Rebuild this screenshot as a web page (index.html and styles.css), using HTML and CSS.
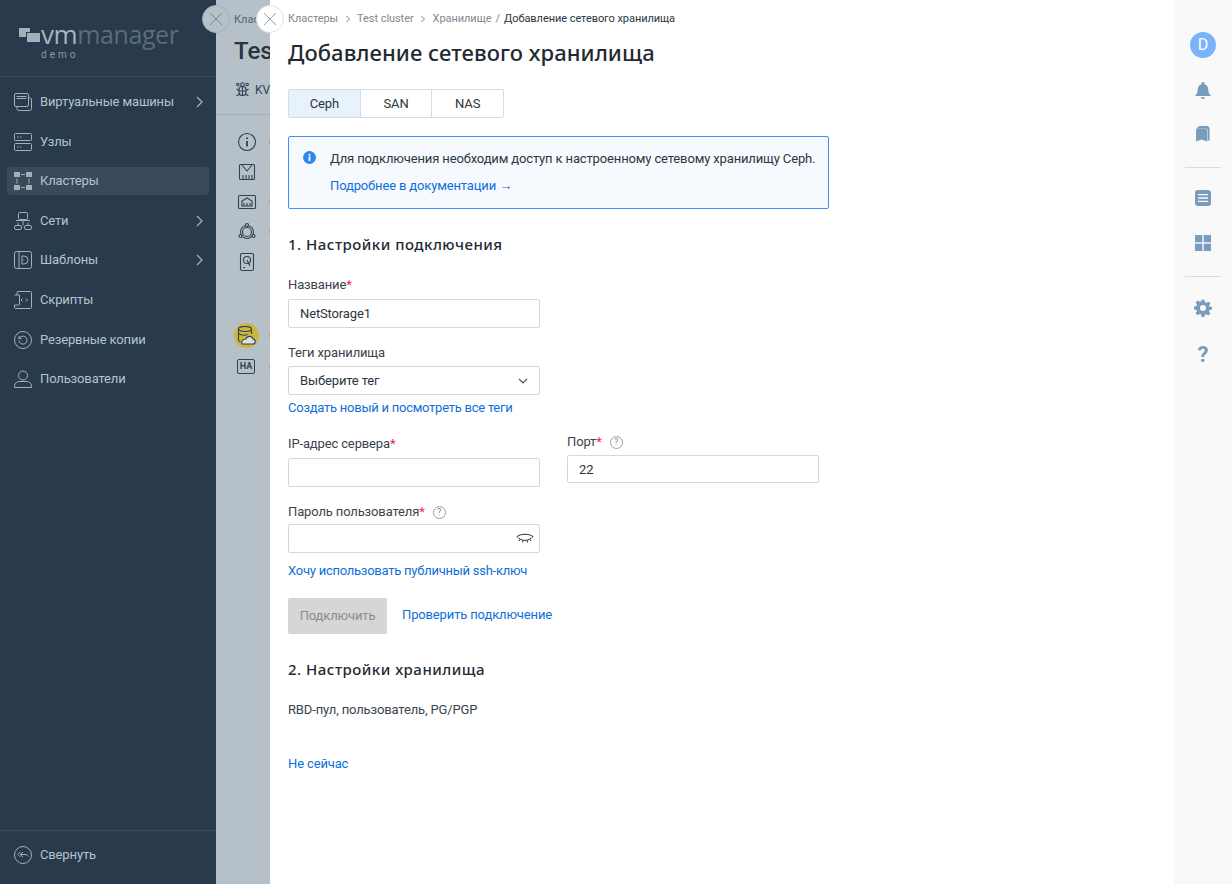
FILE: index.html
```html
<!DOCTYPE html>
<html lang="ru">
<head>
<meta charset="utf-8">
<title>VMmanager</title>
<link rel="stylesheet" href="styles.css">
</head>
<body>
<div class="app">
  <aside class="sidebar">
    <div class="logo">
      <div class="logo-row">
        <svg class="logo-mark" width="21" height="16" viewBox="0 0 21 16"><path d="M0 1h11v4H7v5H0z" fill="#a5afb9"/><rect x="8" y="6" width="13" height="9" fill="#a5afb9"/></svg>
        <span class="logo-vm">vm</span><span class="logo-manager">manager</span>
      </div>
      <div class="logo-demo">demo</div>
    </div>
    <nav class="nav">
      <a class="nav-item"><svg class="nav-icon" viewBox="0 0 18 18"><rect x=".5" y=".5" width="14" height="13" rx="1.500"/><path d="M3 13.500v2a2 2 0 0 0 2 2h10.500a2 2 0 0 0 2-2V7a2 2 0 0 0-3-2M2.500 3.500h10M2.500 5.500h10"/></svg><span class="nav-text">Виртуальные машины</span><svg class="chev" viewBox="0 0 8 12"><path d="M1 1l5 5-5 5"/></svg></a>
      <a class="nav-item"><svg class="nav-icon" viewBox="0 0 18 18"><rect x=".5" y=".5" width="17" height="7" rx="1"/><rect x=".5" y="10.500" width="17" height="7" rx="1"/><path d="M3 4h1.500M6 4h1.500M3 14h1.500M6 14h1.500"/></svg><span class="nav-text">Узлы</span></a>
      <a class="nav-item active"><svg class="nav-icon" viewBox="0 0 18 18"><g class="fillg"><rect x="0" y="0" width="6" height="5"/><rect x="12" y="0" width="6" height="5"/><rect x="0" y="13" width="6" height="5"/><rect x="12" y="13" width="6" height="5"/></g><path d="M7 2.500h4M7 15.500h4M3 6.500v5M15 6.500v5"/></svg><span class="nav-text">Кластеры</span></a>
      <a class="nav-item"><svg class="nav-icon" viewBox="0 0 18 18"><rect x="4.500" y=".5" width="9" height="7" rx="1"/><path d="M2 8.500h14M9 7.500v6M4 10.500v3M14 10.500v3"/><rect x=".5" y="13.500" width="7" height="4" rx="1.500"/><rect x="10.500" y="13.500" width="7" height="4" rx="1.500"/></svg><span class="nav-text">Сети</span><svg class="chev" viewBox="0 0 8 12"><path d="M1 1l5 5-5 5"/></svg></a>
      <a class="nav-item"><svg class="nav-icon" viewBox="0 0 18 18"><rect x=".5" y=".5" width="17" height="17" rx="2"/><path d="M5 .5v17M8 5h2a4 4 0 0 1 0 8H8zM9.500 9h.5"/></svg><span class="nav-text">Шаблоны</span><svg class="chev" viewBox="0 0 8 12"><path d="M1 1l5 5-5 5"/></svg></a>
      <a class="nav-item"><svg class="nav-icon" viewBox="0 0 18 18"><path d="M3 4V1.500a1 1 0 0 1 1-1h12.500a1 1 0 0 1 1 1v15a1 1 0 0 1-1 1H2a1.500 1.500 0 0 1-1.500-1.500v-2h4M.5 4h5v10M8.500 7.500L7 9l1.500 1.500M12 7.500L13.500 9 12 10.500"/></svg><span class="nav-text">Скрипты</span></a>
      <a class="nav-item"><svg class="nav-icon" viewBox="0 0 18 18"><circle cx="9" cy="9" r="8.500"/><path d="M5 9.500a4 4 0 1 0 1.500-3.500L5 7.500M5 5v2.500h2.500"/></svg><span class="nav-text">Резервные копии</span></a>
      <a class="nav-item"><svg class="nav-icon" viewBox="0 0 18 18"><circle cx="9" cy="5.500" r="4.500"/><path d="M.5 17.500v-1.500c0-3 3-4.500 4.500-4.500h8c1.500 0 4.500 1.500 4.500 4.500v1.500z"/></svg><span class="nav-text">Пользователи</span></a>
    </nav>
    <a class="collapse"><svg class="nav-icon" viewBox="0 0 18 18"><circle cx="9" cy="9" r="8.500"/><path d="M6.500 6L4 8.500 6.500 11M9 6L6.500 8.500 9 11M7 8.500h4c2 0 3 1 3.500 2"/></svg><span class="nav-text">Свернуть</span></a>
  </aside>

  <div class="under">
    <div class="under-crumb">Кластеры</div>
    <div class="under-title">Test cluster</div>
    <div class="under-tag">
      <svg class="kvm" width="13" height="16" viewBox="0 0 13 16"><g fill="none" stroke="#33424f" stroke-width="1.100"><circle cx="6.500" cy="2.500" r="1.800"/><circle cx="1.800" cy="2.500" r="1.200"/><circle cx="11.200" cy="2.500" r="1.200"/><rect x="3" y="4.500" width="7" height="9" rx="3"/><path d="M3 9h7M6.500 4.500v9M.5 7l2.500 1.500M12.500 7L10 8.500M.5 14l3-2M12.500 14l-3-2"/></g></svg>
      <span>KVM</span>
    </div>
    <ul class="under-list">
      <li><svg class="ui" viewBox="0 0 20 20"><circle cx="10" cy="10" r="8.500"/><path d="M10 9v5.500M10 5.500v1.500" stroke-width="1.800"/></svg><span>Обзор</span></li>
      <li><svg class="ui" viewBox="0 0 20 20"><rect x="2.500" y="2.500" width="15" height="15" rx="1"/><path d="M5 3l5 6 5-6M6 17v-4M9 17v-4M12 17v-4M15 17v-4"/></svg><span>Узлы</span></li>
      <li><svg class="ui" viewBox="0 0 20 20"><rect x="1.500" y="3.500" width="17" height="13" rx="1"/><path d="M5 14V9l5-3 5 3v5zM7 14v-3M10 14v-3M13 14v-3"/></svg><span>Сети</span></li>
      <li><svg class="ui" viewBox="0 0 20 20"><circle cx="10" cy="10" r="6.500"/><circle cx="10" cy="10" r="4.500"/><circle cx="10" cy="3" r="1.500" fill="#b6c0c8"/><circle cx="3.500" cy="14" r="1.500" fill="#b6c0c8"/><circle cx="16.500" cy="14" r="1.500" fill="#b6c0c8"/></svg><span>Ceph</span></li>
      <li><svg class="ui" viewBox="0 0 20 20"><rect x="3.500" y="1.500" width="13" height="17" rx="1.500"/><circle cx="10" cy="8" r="3.500"/><path d="M6 15.500h2M10 8l3 6"/></svg><span>Хранилище</span></li>
    </ul>
    <div class="under-extra">
      <div class="under-row">
        <div class="badge"><svg width="19" height="19" viewBox="0 0 19 19" fill="none" stroke="#33424f" stroke-width="1.100"><ellipse cx="8" cy="3" rx="6.500" ry="2.500"/><path d="M1.500 3v11c0 1 1 1.500 2 2M14.500 3v5M1.500 7.500c2 1.500 6 2 9 1"/><path d="M5 18h11c3 0 3-4.500 0-5-1-3.500-6-3.500-7 0-3 0-5 2-4 5z" fill="#dfe0dc"/></svg></div>
        <span>Сетевое</span>
      </div>
      <div class="under-row">
        <div class="ha">HA</div>
        <span>Отказоустойчивость</span>
      </div>
    </div>
  </div>

  <button class="close close-back" aria-label="Закрыть"><svg width="14" height="14" viewBox="0 0 14 14"><path d="M1 1l12 12M13 1L1 13"/></svg></button>
  <button class="close close-front" aria-label="Закрыть"><svg width="14" height="14" viewBox="0 0 14 14"><path d="M1 1l12 12M13 1L1 13"/></svg></button>

  <main class="drawer">
    <div class="crumbs">
      <span>Кластеры</span><svg class="crumb-chev" viewBox="0 0 6 8"><path d="M1.500 1l3 3-3 3"/></svg><span>Test cluster</span><svg class="crumb-chev" viewBox="0 0 6 8"><path d="M1.500 1l3 3-3 3"/></svg><span>Хранилище</span><span class="crumb-sep">/</span><span class="crumb-cur">Добавление сетевого хранилища</span>
    </div>
    <h1 class="title">Добавление сетевого хранилища</h1>
    <div class="tabs">
      <div class="tab tab-on">Ceph</div>
      <div class="tab">SAN</div>
      <div class="tab">NAS</div>
    </div>
    <div class="info">
      <svg class="info-icon" width="13" height="13" viewBox="0 0 13 13"><circle cx="6.500" cy="6.500" r="6.500" fill="#2f86ee"/><rect x="5.600" y="5.500" width="1.800" height="4.500" fill="#fff"/><rect x="5.600" y="3" width="1.800" height="1.700" fill="#fff"/></svg>
      <div class="info-body">
        <p class="info-text">Для подключения необходим доступ к настроенному сетевому хранилищу Ceph.</p>
        <a class="link info-link">Подробнее в документации →</a>
      </div>
    </div>
    <h2 class="section sec1">1. Настройки подключения</h2>
    <label class="label lb-name">Название<i>*</i></label>
    <input class="input" value="NetStorage1">
    <label class="label lb-tags">Теги хранилища</label>
    <div class="input select">Выберите тег<svg width="10" height="6" viewBox="0 0 10 6"><path d="M1 1l4 4 4-4"/></svg></div>
    <a class="link lk-tags">Создать новый и посмотреть все теги</a>
    <div class="cols">
      <div class="col">
        <label class="label lb-ip">IP-адрес сервера<i>*</i></label>
        <input class="input ip">
        <label class="label lb-pass">Пароль пользователя<i>*</i><span class="help">?</span></label>
        <div class="input pass"><svg width="18" height="11" viewBox="0 0 18 11" fill="none" stroke="#222b33" stroke-width="1"><path d="M1 3.500C5 .5 13 .5 17 3.500M1 3.500c.5.5 1 1 2 2 4 2.500 8 2.500 12 0l2-2M4 6.500l-1 1.500M7 7.500l-.5 2M11 7.500l.5 2M14 6.500l1 1.500"/></svg></div>
      </div>
      <div class="col">
        <label class="label lb-port">Порт<i>*</i><span class="help">?</span></label>
        <input class="input port" value="22">
      </div>
    </div>
    <a class="link lk-ssh">Хочу использовать публичный ssh-ключ</a>
    <div class="actions">
      <button class="btn" disabled>Подключить</button>
      <a class="link lk-check">Проверить подключение</a>
    </div>
    <h2 class="section sec2">2. Настройки хранилища</h2>
    <p class="plain">RBD-пул, пользователь, PG/PGP</p>
    <a class="link lk-later">Не сейчас</a>
  </main>

  <aside class="rail">
    <div class="avatar">D</div>
    <svg class="rail-icon r-bell" viewBox="0 0 18 20"><path d="M9 0a1.800 1.800 0 0 1 1.700 2.300C13.500 3 15 5.500 15 8.500c0 3 .6 4.500 2.500 6v1H.5v-1C2.400 13 3 11.500 3 8.500c0-3 1.500-5.500 4.300-6.200A1.800 1.800 0 0 1 9 0zM6.500 17h5a2.500 2 0 0 1-5 0z"/></svg>
    <svg class="rail-icon r-book" viewBox="0 0 16 18"><path d="M1 5a4 4 0 0 1 4-4h7a3 3 0 0 1 2.500 2.500V17l-2-1V6a3 3 0 0 0-3-3H5C3 3 1 3 1 5zM0 6a2.500 2.500 0 0 1 2.500-2.500h7A2.500 2.500 0 0 1 12 6v11.500L6 15.500 0 17.500z"/></svg>
    <hr class="rail-line l1">
    <svg class="rail-icon r-list" viewBox="0 0 16 16"><path fill-rule="evenodd" d="M3 0h10a3 3 0 0 1 3 3v10a3 3 0 0 1-3 3H3a3 3 0 0 1-3-3V3a3 3 0 0 1 3-3zM3 4v1.300h10V4zM3 7.300v1.400h10V7.300zM3 10.700V12h10v-1.300z"/></svg>
    <svg class="rail-icon r-grid" viewBox="0 0 16 16"><rect width="7.300" height="7.300"/><rect x="8.700" width="7.300" height="7.300"/><rect y="8.700" width="7.300" height="7.300"/><rect x="8.700" y="8.700" width="7.300" height="7.300"/></svg>
    <hr class="rail-line l2">
    <svg class="rail-icon r-gear" viewBox="0 0 24 24"><path fill-rule="evenodd" d="M10 1h4l.6 3.200 1.900.8 2.700-1.800 2.800 2.800-1.800 2.700.8 1.900L24 10v4l-3.200.6-.8 1.900 1.800 2.700-2.800 2.800-2.700-1.800-1.900.8L14 24h-4l-.6-3.200-1.900-.8-2.700 1.800L2 19l1.800-2.700-.8-1.900L0 14v-4l3.200-.6.800-1.900L2.200 4.800 5 2l2.700 1.800 1.900-.8zM12 8a4 4 0 1 0 0 8 4 4 0 0 0 0-8z"/></svg>
    <div class="rail-q">?</div>
  </aside>
</div>
</body>
</html>
```
FILE: styles.css
```css
* { box-sizing: border-box; }
html, body { margin: 0; height: 100%; }
body {
  font-family: Roboto, "Noto Sans", sans-serif;
  font-size: 13px;
  letter-spacing: -.14px;
  color: #2b3640;
  background: #fff;
  overflow: hidden;
}
.app { position: relative; display: flex; width: 1232px; height: 884px; overflow: hidden; }

/* sidebar */
.sidebar {
  width: 216px;
  flex: none;
  background: #283a4b;
  display: flex;
  flex-direction: column;
  color: #b6c3cf;
}
.logo { height: 77px; padding: 18px 0 0 19px; border-bottom: 1px solid #3a4b5b; }
.logo-row { display: flex; align-items: center; height: 32px; }
.logo-mark { margin-right: 1px; margin-top: 2px; }
.logo-vm { font-family: "Open Sans", sans-serif; font-size: 26px; color: #a9b4be; letter-spacing: -.4px; line-height: 32px; }
.logo-manager { font-family: "Open Sans", sans-serif; font-size: 25px; color: #5c6b79; letter-spacing: -.4px; line-height: 32px; }
.logo-demo { font-size: 10px; line-height: 10px; letter-spacing: 3px; color: #8b98a4; margin: 0 0 0 22px; }
.nav { display: flex; flex-direction: column; gap: 11.600px; padding: 11px 7px 0; flex: 1; }
.nav-item {
  display: flex; align-items: center; height: 28px;
  padding: 0 7px; border-radius: 3px;
}
.nav-item.active { background: #3a4a5a; }
.nav-icon { width: 18px; height: 18px; flex: none; fill: none; stroke: #a3afba; stroke-width: 1; margin-right: 8px; }
.fillg rect { fill: #a3afba; stroke: none; }
.nav-text { font-size: 13px; line-height: 18px; flex: 1; white-space: nowrap; }
.chev { width: 8px; height: 12px; fill: none; stroke: #a3afba; stroke-width: 1.300; flex: none; margin-right: -2px; }
.collapse {
  height: 54px; flex: none; display: flex; align-items: center; padding: 0 14px 6px;
  border-top: 1px solid #3a4b5b;
}

/* dimmed page below the drawer */
.under {
  width: 54px; flex: none; overflow: hidden; background: #b6c0c8; color: #33424f;
  padding-top: 12px; white-space: nowrap; letter-spacing: 0;
}
.under-crumb { font-size: 11px; line-height: 15px; padding-left: 18px; color: #56636f; }
.under-title { font-size: 24px; font-weight: 500; line-height: 30px; margin-top: 9px; padding-left: 18px; width: 200px; color: #28333e; }
.under-tag {
  display: flex; align-items: center; gap: 6px; height: 48px; width: 150px; padding: 0 0 0 20px;
  font-size: 12px;
}
.kvm { flex: none; }
.under-list { list-style: none; margin: 0; padding: 17px 0 0 21px; border-top: 1px solid #a2adb6; display: flex; flex-direction: column; gap: 10px; }
.under-list li { display: flex; align-items: center; gap: 12px; height: 20px; font-size: 12px; color: #7d6a55; width: 120px; }
.ui { width: 20px; height: 20px; fill: none; stroke: #33424f; stroke-width: 1.100; flex: none; }
.under-extra { margin-top: 51px; padding-left: 18px; display: flex; flex-direction: column; gap: 6px; }
.under-row { display: flex; align-items: center; gap: 10px; height: 25px; width: 150px; font-size: 12px; color: #7d6a55; }
.badge { width: 25px; height: 25px; border-radius: 50%; background: #c9b73e; display: flex; align-items: center; justify-content: center; flex: none; }
.ha { width: 18px; height: 15px; margin-left: 3px; margin-right: 4px; border: 1px solid #33424f; border-radius: 2px; font-size: 9px; font-weight: 700; line-height: 13px; text-align: center; color: #33424f; flex: none; }

/* close buttons */
.close {
  position: absolute; top: 5px; width: 28px; height: 28px; padding: 0; border-radius: 50%;
  display: flex; align-items: center; justify-content: center;
  z-index: 3;
}
.close svg { fill: none; stroke-width: 1; }
.close-back { left: 202px; background: #b6c0c8; border: 1px solid #a6b0b9; }
.close-back svg { stroke: #7c8791; }
.close-front { left: 256px; background: #fff; border: 1px solid #dfe2e5; }
.close-front svg { stroke: #9aa1a8; }

/* drawer */
.drawer {
  flex: 1; min-width: 0; background: #fff; padding: 11px 0 0 18px; display: flex; flex-direction: column; align-items: flex-start;
}
.crumbs { display: flex; align-items: center; font-size: 11px; line-height: 16px; letter-spacing: -.06px; color: #7f8890; white-space: nowrap; }
.crumb-chev { width: 6px; height: 8px; fill: none; stroke: #7f8890; stroke-width: 1; margin: 0 6.500px; }
.crumb-sep { margin: 0 4px; }
.crumb-cur { color: #2b3640; }
.title { margin: 8px 0 0; font-family: "Noto Sans", sans-serif; font-size: 22px; line-height: 34px; font-weight: 500; letter-spacing: .07px; color: #1f2a33; white-space: nowrap; }
.tabs { display: flex; width: 216px; height: 29px; margin-top: 20px; border: 1px solid #d9dcdf; border-radius: 2px; }
.tab { flex: 1; display: flex; align-items: center; justify-content: center; font-size: 13px; color: #2b3640; border-left: 1px solid #d9dcdf; }
.tab:first-child { border-left: 0; }
.tab-on { background: #e8f2fd; }
.info {
  display: flex; width: 541px; height: 73px; margin-top: 18px; padding: 14px 14px 0;
  border: 1px solid #3d92f3; border-radius: 2px; background: #f6faff; gap: 14px;
}
.info-icon { flex: none; margin-top: 0; }
.info-text { margin: 0; font-size: 13px; line-height: 16px; white-space: nowrap; }
.info-link { display: block; margin-top: 11px; }
.link { color: #0e6fd8; font-size: 13px; line-height: 16px; white-space: nowrap; }
.section { margin: 0; font-family: "Noto Sans", sans-serif; font-size: 15px; font-weight: 500; line-height: 20px; color: #1f2a33; letter-spacing: .5px; white-space: nowrap; }
.sec1 { margin-top: 25px; }
.label { display: flex; align-items: center; font-size: 13px; line-height: 16px; color: #3a444e; white-space: nowrap; }
.label i { color: #e8265e; font-style: normal; }
.lb-name { margin-top: 23px; }
.input {
  display: block; width: 252px; height: 29px; padding: 0 11px; border: 1px solid #d6d8da; border-radius: 2px;
  font: inherit; font-size: 13px; letter-spacing: -.14px; color: #2b3640; background: #fff; outline: 0; margin-top: 6px;
}
.lb-tags { margin-top: 17px; }
.select { display: flex; align-items: center; justify-content: space-between; margin-top: 5px; }
.select svg { fill: none; stroke: #4a545d; stroke-width: 1.200; margin-right: 0; }
.lk-tags { display: block; margin-top: 5px; letter-spacing: -.25px; }
.cols { display: flex; gap: 27px; }
.col { display: flex; flex-direction: column; }
.lb-ip { margin-top: 20px; }
.lb-pass { margin-top: 17px; }
.pass { display: flex; align-items: center; justify-content: flex-end; padding-right: 5px; margin-top: 4px; }
.lb-port { margin-top: 18px; }
.port { height: 28px; margin-top: 5px; }
.help {
  display: inline-block; width: 13px; height: 13px; margin-left: 8px; border: 1px solid #9aa1a8; border-radius: 50%;
  font-size: 9px; line-height: 11px; letter-spacing: 0; text-align: center; color: #7f8890;
}
.lk-ssh { display: block; margin-top: 10px; letter-spacing: -.25px; }
.actions { display: flex; align-items: flex-start; margin-top: 19px; }
.btn {
  width: 99px; height: 36px; padding: 0 0 2px; border: 0; border-radius: 2px; background: #d6d6d6; color: #8c8c8c; font: inherit; font-size: 13px; letter-spacing: -.14px;
}
.lk-check { margin: 9px 0 0 15px; }
.sec2 { margin-top: 25px; }
.plain { margin: 23px 0 0; font-size: 13px; line-height: 16px; color: #3a444e; }
.lk-later { display: block; margin-top: 38px; }

/* right rail */
.rail {
  width: 58px; flex: none; background: #f9f9f9; display: flex; flex-direction: column; align-items: center;
  padding-top: 32px;
}
.avatar { width: 26px; height: 26px; border-radius: 50%; background: #79b4fb; color: #fff; font-size: 16px; line-height: 26px; text-align: center; }
.rail-icon { fill: #7a9cbc; display: block; flex: none; }
.r-bell { width: 16px; height: 20px; margin-top: 23px; }
.r-book { width: 15px; height: 17px; margin-top: 24px; }
.rail-line { width: 36px; height: 1px; border: 0; background: #dcdcdc; margin: 0; flex: none; }
.l1 { margin-top: 25px; }
.r-list { width: 16px; height: 16px; margin-top: 22px; }
.r-grid { width: 16px; height: 16px; margin-top: 29px; }
.l2 { margin-top: 25px; }
.r-gear { width: 18px; height: 18px; margin-top: 22px; }
.rail-q { font-size: 22px; font-weight: 700; line-height: 26px; color: #7a9cbc; margin-top: 25px; }
```
